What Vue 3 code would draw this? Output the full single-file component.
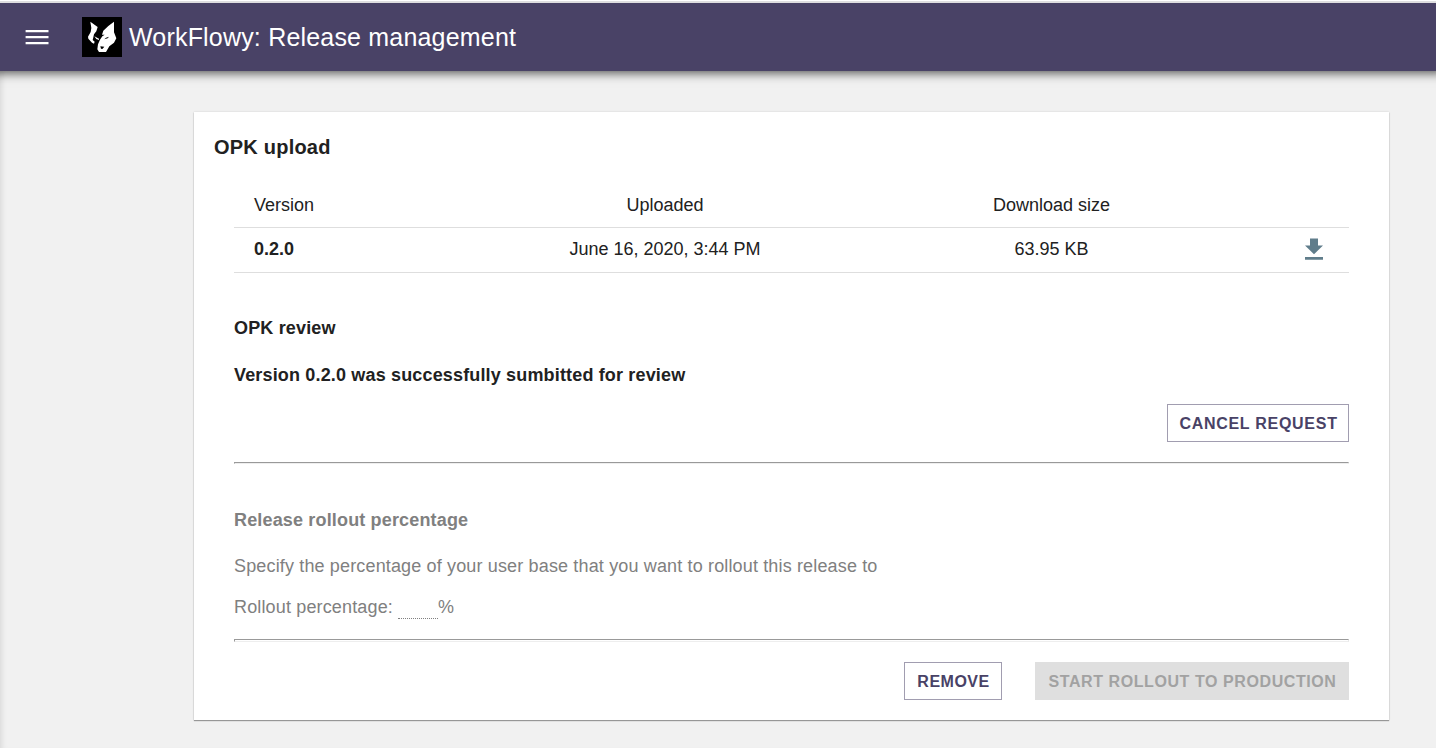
<script setup>
const columns = ['Version', 'Uploaded', 'Download size']
const release = { version: '0.2.0', uploaded: 'June 16, 2020, 3:44 PM', size: '63.95 KB' }
</script>

<template>
  <div class="page">
    <header class="bar">
      <svg class="menu" width="24" height="16" viewBox="0 0 24 16">
        <path d="M-.4 1h22.900v2.200H-.4zM-.4 7h22.900v2.200H-.4zM-.4 13h22.900v2.200H-.4z" fill="#fff" />
      </svg>
      <svg class="logo" width="40" height="40" viewBox="0 0 120 120">
        <rect width="120" height="120" fill="#000" />
        <g fill="#fff">
          <path d="M25 14 47 30 43 43 36 52 33 65 32 69 38 74 36 80 30 77 19 65 18 59 26 45 28 33z" />
          <path d="M96 14 96 46 103 64 96 77 82 88 72 105 51 105 46 97 48 82 54 68 61 58 68 53 60 53 64 41 79 27z" />
          <path d="M37 58 51 65 51 69 43 66z" />
        </g>
        <path d="M67 67 72 62 81 59 77 64zM55 88 67 89 61 96 57 95z" fill="#000" />
      </svg>
      <h1>WorkFlowy: Release management</h1>
    </header>
    <main class="content">
      <section class="card">
        <h2>OPK upload</h2>
        <div class="body">
          <div class="row head">
            <span v-for="c in columns" :key="c">{{ c }}</span>
            <span></span>
          </div>
          <div class="row">
            <b>{{ release.version }}</b>
            <span>{{ release.uploaded }}</span>
            <span>{{ release.size }}</span>
            <svg class="download" width="18" height="22" viewBox="0 0 18 22">
              <path d="M5 0.5h8v7h5L9 16.2 0 7.500h5zM0 19h18v2.700H0z" fill="#607d8b" />
            </svg>
          </div>
          <h3 class="review">OPK review</h3>
          <p class="status">Version 0.2.0 was successfully sumbitted for review</p>
          <div class="actions">
            <button class="outlined cancel">CANCEL REQUEST</button>
          </div>
          <hr class="first" />
          <div class="rollout">
            <h3>Release rollout percentage</h3>
            <p class="hint">Specify the percentage of your user base that you want to rollout this release to</p>
            <label>Rollout percentage: <span class="field"></span>%</label>
          </div>
          <hr />
          <div class="actions bottom">
            <button class="outlined remove">REMOVE</button>
            <button class="start" disabled>START ROLLOUT TO PRODUCTION</button>
          </div>
        </div>
      </section>
    </main>
  </div>
</template>

<style>
body { margin: 0; overflow: hidden; }
</style>

<style scoped>
.page {
  height: 748px;
  box-sizing: border-box;
  border-top: 1px solid #fff;
  background: #f1f1f1;
  font-family: "Liberation Sans", Arial, sans-serif;
  font-size: 18px;
  color: #212121;
  overflow: hidden;
}
.bar {
  position: relative;
  height: 68px;
  border-top: 2px solid #dedee0;
  background: #494266;
  box-shadow: 0 -6px 10px 8px rgba(0, 0, 0, .68);
  display: flex;
  align-items: center;
}
.menu { margin-left: 26px; overflow: visible; }
.logo { margin-left: 32px; }
h1, h2, h3, p { margin: 0; }
h1 { margin-left: 7px; font-size: 25px; font-weight: 400; line-height: 30px; letter-spacing: .19px; color: #fff; white-space: nowrap; }
.content {
  height: 677px;
  box-sizing: border-box;
  padding: 41px 47px 0 194px;
  box-shadow: inset 6px 0 6px -5px rgba(0, 0, 0, .12);
}
.card {
  height: 608px;
  box-sizing: border-box;
  padding: 22px 40px 0;
  background: #fff;
  box-shadow: 0 1px 1px rgba(0, 0, 0, .34), 0 0 2px rgba(0, 0, 0, .14);
}
h2 { margin-left: -20px; font-size: 20px; line-height: 26px; letter-spacing: .22px; }
.body { padding-top: 22px; }
.row {
  height: 44px;
  display: grid;
  grid-template-columns: 238px 386px 387px 104px;
  align-items: center;
  border-bottom: 1px solid #dedede;
  text-align: center;
}
.row > * { margin-bottom: 2px; }
.row.head { height: 45px; }
.head > * { margin: 2px 0 0; }
.row > :first-child { text-align: left; padding-left: 20px; }
.row > .download { margin: 0 0 2px 60px; }
h3 { font-size: 18px; line-height: 22px; letter-spacing: .16px; }
.review { margin-top: 44px; }
.status { margin-top: 25px; font-weight: 700; line-height: 22px; letter-spacing: .16px; }
.actions { margin-top: 18px; display: flex; justify-content: flex-end; }
button {
  height: 38px;
  box-sizing: border-box;
  padding: 2px 0 0 1px;
  border: 0;
  font: 700 16px "Liberation Sans", Arial, sans-serif;
  white-space: nowrap;
}
.outlined { border: 1px solid #a19db0; background: #fff; color: #494266; }
.cancel { width: 182px; letter-spacing: .72px; }
.remove { width: 98px; letter-spacing: .5px; }
.start { width: 314px; margin-left: 33px; letter-spacing: .58px; background: #dfdfdf; color: #a2a2a2; }
hr { height: 1px; margin: 20px 0 0; border: 1px solid; border-color: #999 #e8e8e8 #eee #999; }
.first { height: 0; }
.rollout { color: #808080; padding-top: 45px; }
.hint { margin-top: 24px; line-height: 22px; letter-spacing: .15px; }
label { display: block; margin-top: 19px; height: 23px; line-height: 22px; letter-spacing: .15px; }
.field { display: inline-block; width: 40px; height: 21px; border-bottom: 1px dotted #808080; vertical-align: -6px; }
.bottom { margin-top: 20px; }
</style>
